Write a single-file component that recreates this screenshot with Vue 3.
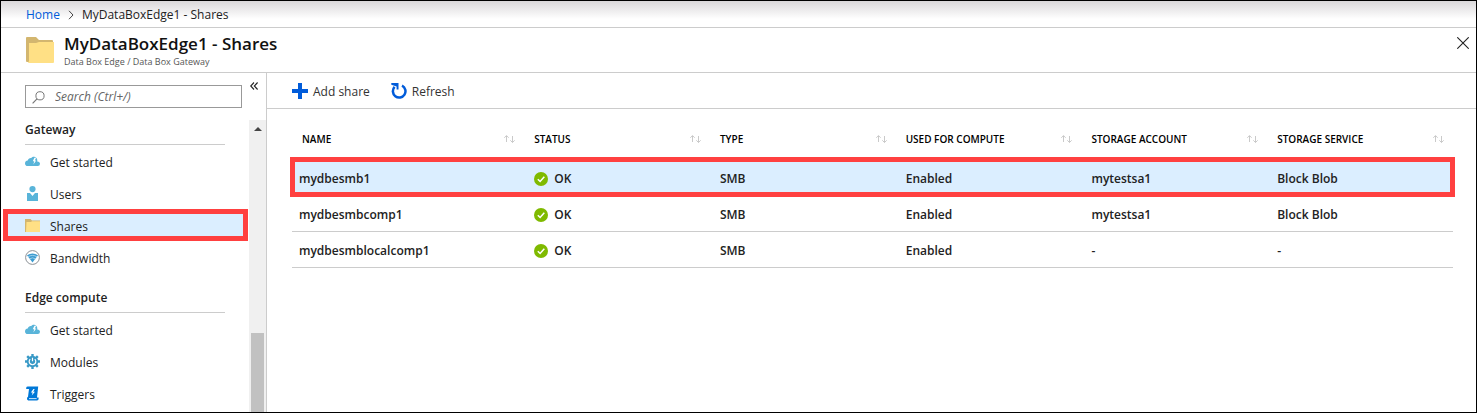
<script setup>
import { ref } from 'vue'

const search = ref('')

const groups = [
  {
    title: 'Gateway',
    items: [
      { label: 'Get started', icon: 'cloud' },
      { label: 'Users', icon: 'user' },
      { label: 'Shares', icon: 'folder', active: true },
      { label: 'Bandwidth', icon: 'wifi' },
    ],
  },
  {
    title: 'Edge compute',
    items: [
      { label: 'Get started', icon: 'cloud' },
      { label: 'Modules', icon: 'gear' },
      { label: 'Triggers', icon: 'trigger' },
    ],
  },
]

const columns = ['Name', 'Status', 'Type', 'Used for compute', 'Storage account', 'Storage service']

const shares = [
  { name: 'mydbesmb1', status: 'OK', type: 'SMB', compute: 'Enabled', account: 'mytestsa1', service: 'Block Blob', selected: true },
  { name: 'mydbesmbcomp1', status: 'OK', type: 'SMB', compute: 'Enabled', account: 'mytestsa1', service: 'Block Blob' },
  { name: 'mydbesmblocalcomp1', status: 'OK', type: 'SMB', compute: 'Enabled', account: '-', service: '-' },
]
</script>

<template>
  <div class="portal">
    <nav class="crumbs" aria-label="Breadcrumb">
      <a href="#">Home</a>
      <svg width="6" height="10" viewBox="0 0 6 10" aria-hidden="true"><path d="M1 .8 5 5 1 9.2" fill="none" stroke="#444" /></svg>
      <span>MyDataBoxEdge1 - Shares</span>
    </nav>

    <header class="blade-head">
      <svg class="folder" width="28" height="26" viewBox="0 0 28 26" aria-hidden="true">
        <path d="M0 1a1 1 0 0 1 1-1h9l3 3h13a1 1 0 0 1 1 1v21H1a1 1 0 0 1-1-1z" fill="#d3b66f" />
        <path d="M3 6h7l3-1h15v20a1 1 0 0 1-1 1H2l1-2z" fill="#ffe085" />
      </svg>
      <div class="titles">
        <h1>MyDataBoxEdge1 - Shares</h1>
        <p>Data Box Edge / Data Box Gateway</p>
      </div>
      <button class="close" type="button" aria-label="Close">
        <svg width="12" height="12" viewBox="0 0 12 12"><path d="M.3.3 11.7 11.7M11.7.3.3 11.7" stroke="#222" stroke-width="1.1" /></svg>
      </button>
    </header>

    <div class="body">
      <aside class="side">
        <div class="side-top">
          <label class="search">
            <svg width="13" height="13" viewBox="0 0 13 13" aria-hidden="true">
              <circle cx="8" cy="4.8" r="4.1" fill="none" stroke="#777" />
              <path d="M5 7.8.6 12.4" stroke="#777" stroke-width="1.2" />
            </svg>
            <input v-model="search" type="text" aria-label="Search" placeholder="Search (Ctrl+/)" />
          </label>
          <button class="collapse" type="button" aria-label="Collapse menu">
            <svg width="8" height="8" viewBox="0 0 8 8"><path d="M4 .5.7 4 4 7.5M7.6.5 4.3 4l3.3 3.5" fill="none" stroke="#222" stroke-width="1.1" /></svg>
          </button>
        </div>

        <div class="side-main">
          <div class="menu">
            <section v-for="g in groups" :key="g.title">
              <h2>{{ g.title }}</h2>
              <ul>
                <li v-for="item in g.items" :key="item.label">
                  <a href="#" :class="{ active: item.active }">
                    <svg v-if="item.icon === 'cloud'" width="15" height="15" viewBox="0 0 15 15" aria-hidden="true">
                      <path d="M2.800 12A2.800 2.800 0 0 1 0 9.200C0 7.700 1.200 6.600 2.700 6.500 3.200 4.900 4.600 3.900 6.200 4.100 7 3 8.200 2.500 9.400 2.700c1.700.2 2.900 1.700 2.900 3.500l-.1 1.200C13.900 7.300 15 8.400 15 9.800A2.200 2.200 0 0 1 12.800 12z" fill="#59b4d9" />
                      <path d="M9.400 3.800 7.800 7.300h1.500L8.300 10.400 11.200 6.600H9.800L11.200 3.800z" fill="#fff" />
                    </svg>
                    <svg v-else-if="item.icon === 'user'" width="15" height="15" viewBox="0 0 15 15" aria-hidden="true">
                      <circle cx="7.500" cy="3.100" r="3.100" fill="#59b4d9" />
                      <path d="M2 7h3l2.500 3L10 7h3v8H2z" fill="#59b4d9" />
                    </svg>
                    <svg v-else-if="item.icon === 'folder'" width="15" height="15" viewBox="0 0 15 15" aria-hidden="true">
                      <path d="M0 1h5.500L7 2.500h8V14H0z" fill="#d3b66f" />
                      <path d="M1.500 4h4.500l1-.8h8V14H1z" fill="#ffe085" />
                    </svg>
                    <svg v-else-if="item.icon === 'wifi'" width="15" height="15" viewBox="0 0 15 15" aria-hidden="true">
                      <circle cx="7.500" cy="7.500" r="6.900" fill="#fff" stroke="#8a8f94" />
                      <path d="M2 5.300Q7.500 1.600 13 5.300L7.500 12.600z" fill="#3c9bd0" />
                      <path d="M2.800 7Q7.500 3.800 12.200 7M4.300 9Q7.500 6.700 10.700 9" fill="none" stroke="#c5e5f5" stroke-width=".7" />
                    </svg>
                    <svg v-else-if="item.icon === 'gear'" width="15" height="15" viewBox="0 0 15 15" aria-hidden="true">
                      <circle cx="7.500" cy="7.500" r="5.700" fill="#3999c6" />
                      <path d="M7.500 0v15M0 7.500h15M2.200 2.200l10.600 10.600M12.800 2.200 2.200 12.800" stroke="#3999c6" stroke-width="2.400" />
                      <path d="M5.200 5.100a3.300 3.300 0 1 0 4.600 0M7.500 3.800v3.400" fill="none" stroke="#fff" stroke-width="1.200" />
                    </svg>
                    <svg v-else width="15" height="15" viewBox="0 0 15 15" aria-hidden="true">
                      <path d="M1.200 3V1.800Q1.500.6 2.800.6h10.400L12 11.500h1.600Q14 14.400 11.800 14.400H3.300Q1.800 14.400 2 12.600 2.200 11 3 10.800L4 3z" fill="#0078d7" />
                      <path d="M4 12.600h7.600" stroke="#fff" stroke-width=".8" />
                      <path d="M8.400 3 5.900 6.600h1.800L6.700 9.600 10 5.700H8.200L9.700 3z" fill="#fff" />
                    </svg>
                    <span>{{ item.label }}</span>
                  </a>
                </li>
              </ul>
            </section>
          </div>
          <div class="scrollbar" aria-hidden="true">
            <svg width="8" height="4" viewBox="0 0 8 4"><path d="M0 4 4 0l4 4z" fill="#444" /></svg>
            <div class="thumb"></div>
          </div>
        </div>
      </aside>

      <main class="content">
        <div class="toolbar">
          <button type="button">
            <svg width="16" height="16" viewBox="0 0 16 16" aria-hidden="true"><path d="M8 0v16M0 8h16" stroke="#015cda" stroke-width="4" /></svg>
            <span>Add share</span>
          </button>
          <button type="button">
            <svg width="16" height="16" viewBox="0 0 16 16" aria-hidden="true">
              <path d="M11 2.600A6.300 6.300 0 1 1 3.600 3.900" fill="none" stroke="#015cda" stroke-width="2.500" />
              <path d="M.3 0h7.200v6.600H5.600V3.400L.3 1.800z" fill="#015cda" />
            </svg>
            <span>Refresh</span>
          </button>
        </div>

        <table>
          <thead>
            <tr>
              <th v-for="c in columns" :key="c" scope="col">
                <div class="th">
                  {{ c }}
                  <svg width="11" height="8" viewBox="0 0 11 8" aria-hidden="true">
                    <path d="M2.500 7V.8M.3 2.800 2.500.6l2.200 2.200M8.500 1v6.400M6.300 5.300l2.200 2.200 2.200-2.200" fill="none" stroke="#c4c4c4" stroke-width=".9" />
                  </svg>
                </div>
              </th>
            </tr>
          </thead>
          <tbody>
            <tr v-for="s in shares" :key="s.name" :class="{ selected: s.selected }">
              <td>{{ s.name }}</td>
              <td>
                <span class="status">
                  <svg width="14" height="14" viewBox="0 0 14 14" aria-hidden="true">
                    <circle cx="7" cy="7" r="7" fill="#7fba00" />
                    <path d="M3.800 7.200 6.100 9.500l4.200-4.800" fill="none" stroke="#fff" stroke-width="1.500" />
                  </svg>
                  {{ s.status }}
                </span>
              </td>
              <td>{{ s.type }}</td>
              <td>{{ s.compute }}</td>
              <td>{{ s.account }}</td>
              <td>{{ s.service }}</td>
            </tr>
          </tbody>
        </table>
      </main>
    </div>
  </div>
</template>

<style>
body {
  margin: 0;
}
</style>

<style scoped>
.portal {
  box-sizing: border-box;
  min-height: 100vh;
  display: flex;
  flex-direction: column;
  border: 1px solid #000;
  background: #fff;
  color: #222;
  font-family: "Open Sans", "Noto Sans", sans-serif;
  font-size: 12px;
  line-height: 16px;
}
svg {
  display: block;
  flex: none;
}
button {
  padding: 0;
  border: 0;
  background: none;
  color: inherit;
  font: inherit;
}
a {
  color: inherit;
  text-decoration: none;
}
h1,
h2,
p,
ul {
  margin: 0;
  padding: 0;
  list-style: none;
}
.crumbs {
  display: flex;
  align-items: center;
  gap: 8px;
  height: 24px;
  padding: 2px 0 0 25px;
  border-bottom: 1px solid #ccc;
  background: linear-gradient(#dad8da, #fff 18px);
}
.crumbs a {
  color: #015cda;
}
.blade-head {
  display: flex;
  align-items: center;
  gap: 10px;
  height: 44px;
  padding: 0 7px 0 25px;
  border-bottom: 1px solid #ccc;
}
.titles {
  flex: 1;
  padding-top: 2px;
}
h1 {
  font-size: 17px;
  line-height: 22px;
  font-weight: 600;
  color: #111;
}
.titles p {
  font-size: 9px;
  line-height: 14px;
  color: #555;
}
.close {
  align-self: flex-start;
  padding-top: 9px;
}
.body {
  flex: 1;
  display: flex;
}
.side {
  flex: none;
  width: 265px;
  display: flex;
  flex-direction: column;
  border-right: 1px solid #ccc;
}
.side-top {
  display: flex;
  align-items: flex-start;
  gap: 8px;
  padding: 9px 0 12px 24px;
}
.collapse {
  height: 16px;
  display: flex;
  align-items: flex-start;
}
.search {
  box-sizing: border-box;
  width: 217px;
  height: 23px;
  display: flex;
  align-items: center;
  gap: 10px;
  margin-top: 3px;
  padding: 1px 6px 0;
  border: 1px solid #999;
}
.search input {
  flex: 1;
  min-width: 0;
  padding: 0;
  border: 0;
  outline: 0;
  background: none;
  color: #222;
  font: italic 12px/16px "Open Sans", "Noto Sans", sans-serif;
}
.search input::placeholder {
  color: #666;
}
.side-main {
  flex: 1;
  display: flex;
}
.menu {
  flex: 1;
  padding: 0 1px 0 2px;
}
h2 {
  margin: 0 23px 0 22px;
  padding: 2px 0 6px;
  border-bottom: 1px solid #ccc;
  font-size: 12px;
  line-height: 16px;
  font-weight: 600;
}
section + section {
  padding-top: 15px;
}
.menu a {
  box-sizing: border-box;
  display: flex;
  align-items: center;
  gap: 10px;
  height: 32px;
  padding: 1px 0 0 22px;
}
.menu span,
.toolbar span {
  padding-top: 2px;
}
.menu a.active {
  background: #dbeeff;
  outline: 5px solid #ff4040;
  outline-offset: -5px;
}
.scrollbar {
  width: 17px;
  display: flex;
  flex-direction: column;
  align-items: center;
  padding-top: 7px;
  box-sizing: border-box;
  background: #f0f0f0;
}
.thumb {
  width: 13px;
  flex: 1;
  margin-top: 202px;
  background: #c1c1c1;
}
.content {
  flex: 1;
  min-width: 0;
}
.toolbar {
  display: flex;
  gap: 21px;
  height: 35px;
  padding-left: 25px;
  border-bottom: 1px solid #ccc;
}
.toolbar button {
  display: flex;
  align-items: center;
  gap: 5px;
  color: #333;
}
table {
  width: calc(100% - 48px);
  margin: 10px 23px 0 25px;
  border-collapse: separate;
  border-spacing: 0;
  table-layout: fixed;
  border-bottom: 1px solid #ccc;
}
th,
td {
  box-sizing: border-box;
  padding: 0 9px 0 10px;
  text-align: left;
}
th {
  width: 16%;
  height: 40px;
  font-size: 10px;
  line-height: 16px;
  font-weight: 600;
  text-transform: uppercase;
  color: #000;
}
th:first-child {
  width: 20%;
}
.th {
  display: flex;
  justify-content: space-between;
  align-items: center;
}
td {
  height: 36px;
  padding-top: 2px;
  border-top: 1px solid #ccc;
  font-weight: 600;
}
td:first-child {
  padding-left: 7px;
}
.status {
  display: flex;
  align-items: center;
  gap: 6px;
}
tr.selected td {
  background: #dbeeff;
}
tr.selected {
  outline: 5px solid #ff4040;
  outline-offset: -3px;
}
</style>
